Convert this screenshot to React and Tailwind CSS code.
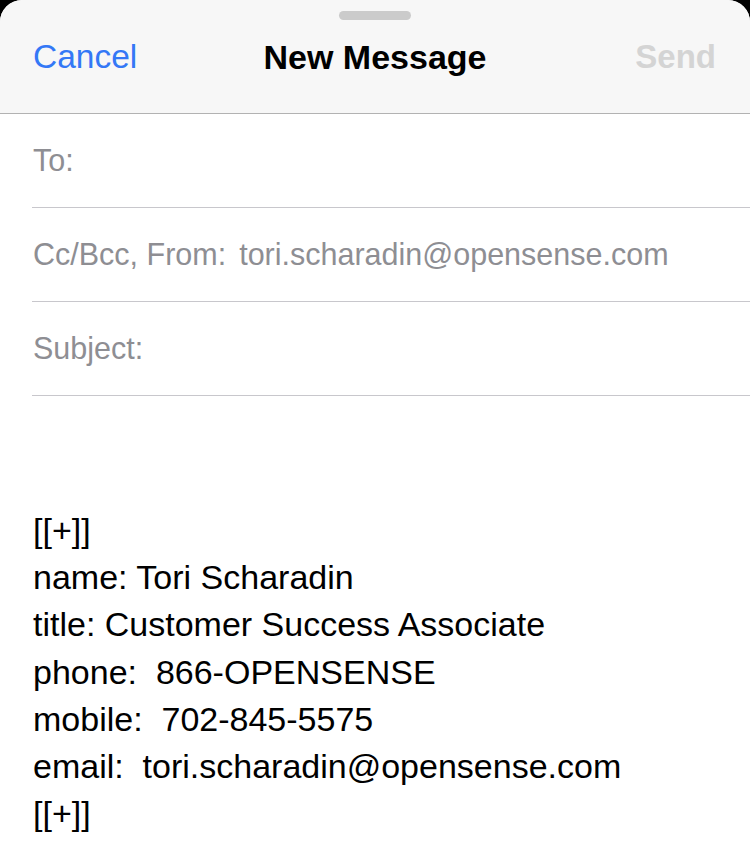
import React from 'react'

const fields = [
  { label: 'To:', value: '' },
  { label: 'Cc/Bcc, From:', value: 'tori.scharadin@opensense.com' },
  { label: 'Subject:', value: '' },
]

const bodyLines = [
  '[[+]]',
  'name: Tori Scharadin',
  'title: Customer Success Associate',
  'phone:  866-OPENSENSE',
  'mobile:  702-845-5575',
  'email:  tori.scharadin@opensense.com',
  '[[+]]',
]

const App = () => {
  return (
    <div className="w-[750px] h-[858px] bg-black overflow-hidden" style={{ fontFamily: '"Liberation Sans", Arial, sans-serif' }}>
      <div className="h-full bg-white rounded-t-[22px] overflow-hidden">
        {/* header */}
        <div className="bg-[#f7f7f7] h-[114px] border-b border-[#b2b2b2]">
          <div className="flex justify-center pt-[11px]">
            <div className="w-[72px] h-[9px] rounded-full bg-[#cbcbcb]"></div>
          </div>
          <div className="flex items-center px-[33px] h-[56px] mt-[9px]">
            <div className="flex-1">
              <span className="text-[33.5px] text-[#3478f6]">Cancel</span>
            </div>
            <span className="text-[34px] font-bold text-black">New Message</span>
            <div className="flex-1 flex justify-end">
              <span className="text-[33px] font-bold text-[#d4d4d4] mr-[1px]">Send</span>
            </div>
          </div>
        </div>

        {/* fields */}
        <div className="pl-[32px]">
          {fields.map((f) => (
            <div key={f.label} className="h-[94px] border-b border-[#c8c7cc] flex items-center">
              <span className="text-[30.5px] text-[#8e8e93] pl-[1px]">{f.label}</span>
              {f.value && (
                <span className="text-[30.5px] text-[#8e8e93] ml-[13px]">{f.value}</span>
              )}
            </div>
          ))}
        </div>

        {/* body */}
        <div className="px-[33px] pt-[111px]">
          {bodyLines.map((line, i) => (
            <div key={i} className="text-[34px] leading-[47.2px] text-black whitespace-pre">
              {line}
            </div>
          ))}
        </div>
      </div>
    </div>
  )
}

export default App
